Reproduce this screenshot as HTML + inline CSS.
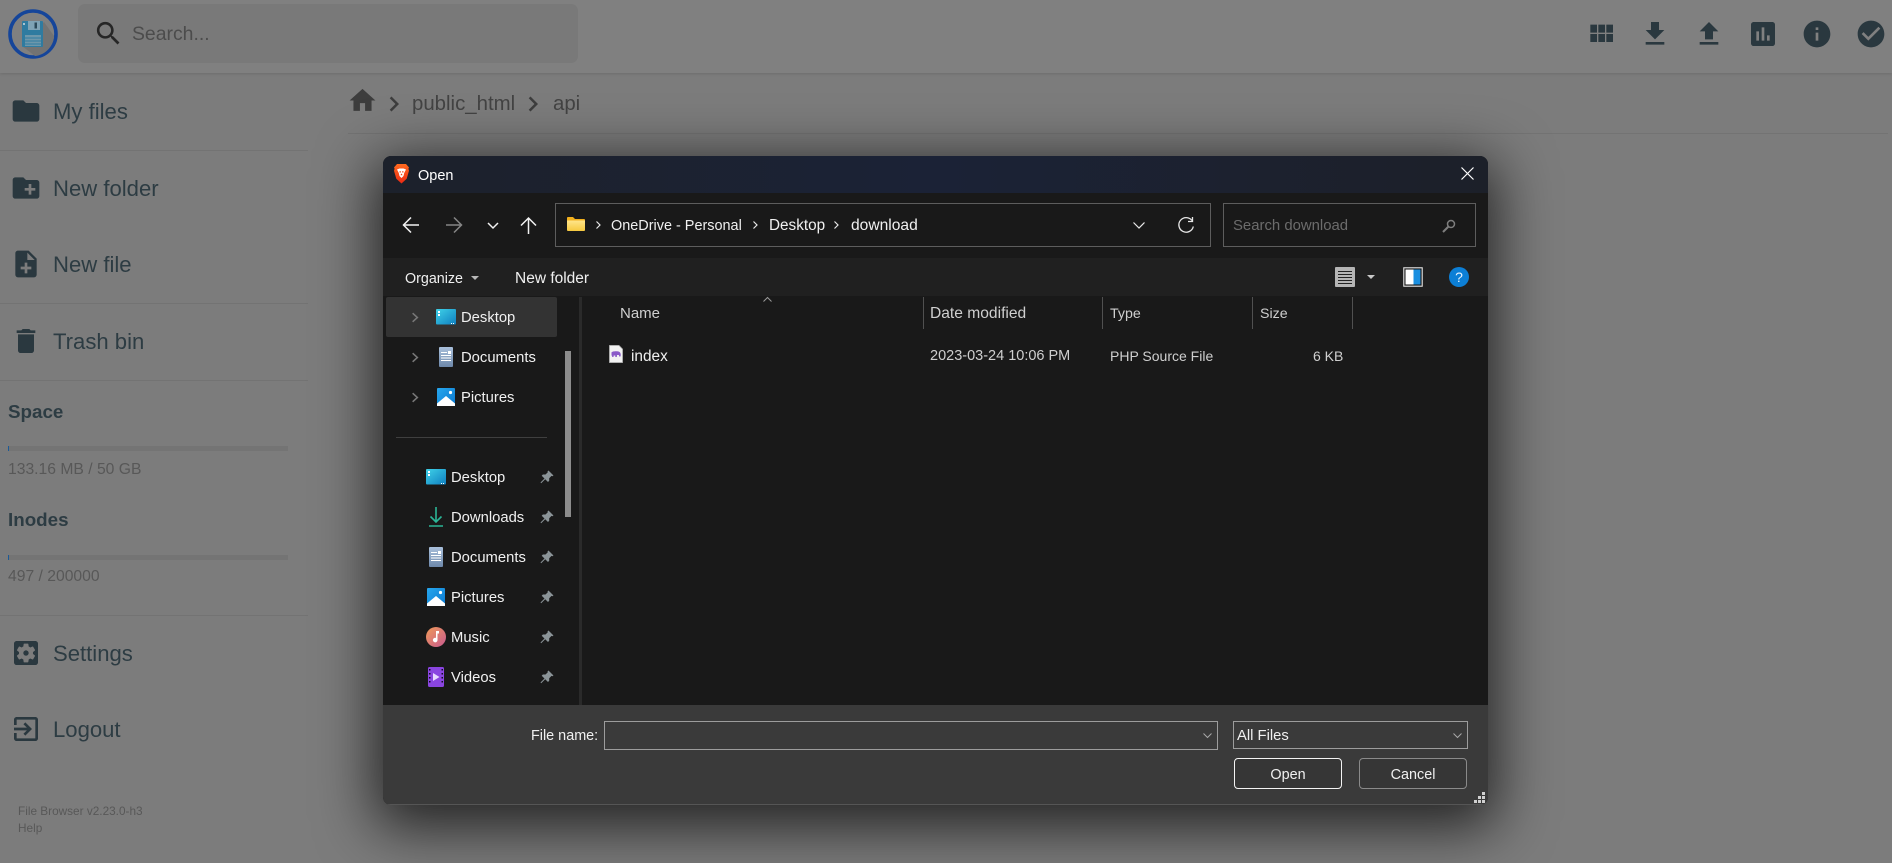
<!DOCTYPE html>
<html lang="en"><head><meta charset="utf-8"><title>File Browser</title>
<style>
html,body{margin:0;padding:0;width:1892px;height:863px;overflow:hidden;background:#7c7c7c;font-family:"Liberation Sans",sans-serif}
.a{position:absolute}
.t{position:absolute;white-space:nowrap;line-height:20px;height:20px}
svg{position:absolute;overflow:visible}
.side{color:#2d3c43;font-size:22.1px}
.ic{fill:#2a383f}
.hr{position:absolute;height:1px;background:#737373}
.d{color:#f0f0f0;font-size:14.8px}
.h{color:#cfcfcf;font-size:14.4px}
</style></head><body>
<svg width="0" height="0" style="position:absolute"><defs>
<symbol id="pin" viewBox="0 0 14 14"><path fill="#8b9498" d="M8.500 .5L13.500 5.500 12.300 6.200 11.500 5.900 9.200 8.200 9.200 10.800 8 12 5.200 9.200 1.200 13.200 .5 12.500 4.500 8.500 1.700 5.700 2.900 4.500 5.500 4.500 7.800 2.200 7.500 1.500z"/></symbol>
<symbol id="chev" viewBox="0 0 10 14"><path fill="none" stroke="#777" stroke-width="2" d="M2 1.500L8 7 2 12.500"/></symbol>
<symbol id="desk" viewBox="0 0 20 16"><defs><linearGradient id="dg" x1="0" y1="0" x2="1" y2="1"><stop offset="0" stop-color="#3fd2e8"/><stop offset="1" stop-color="#0f7fc0"/></linearGradient></defs><rect width="20" height="15.500" rx="1" fill="url(#dg)"/><rect x="2" y="2" width="2" height="2" fill="#fff"/><rect x="2" y="5" width="2" height="2" fill="#fff"/><rect x="15" y="14" width="1" height="1" fill="#fff"/><rect x="17" y="14" width="1" height="1" fill="#fff"/></symbol>
<symbol id="doc" viewBox="0 0 14 20"><defs><linearGradient id="dc" x1="0" y1="0" x2="0" y2="1"><stop offset="0" stop-color="#a9c0dc"/><stop offset="1" stop-color="#6d88aa"/></linearGradient></defs><rect width="14" height="20" rx="1" fill="url(#dc)"/><path fill="#fff" d="M2 5h6v1H2zM9 4h3v3H9zM2 8h10v1H2zM2 10.500h10v1H2zM2 13h10v1H2z"/></symbol>
<symbol id="pic" viewBox="0 0 18 18"><defs><linearGradient id="pg" x1="0" y1="0" x2="1" y2="1"><stop offset="0" stop-color="#27a7ee"/><stop offset="1" stop-color="#0a78cf"/></linearGradient></defs><rect width="18" height="18" rx="1" fill="url(#pg)"/><path fill="#fff" d="M0 18V15.500L9 8l9 7.500V18z"/><circle cx="13.500" cy="4.500" r="1.600" fill="#fff"/></symbol>
</defs></svg>

<!-- header -->
<div class="a" style="left:0;top:0;width:1892px;height:73px;background:#808080;box-shadow:0 1px 3px rgba(0,0,0,.12)"></div>
<svg style="left:8px;top:9px" width="50" height="50" viewBox="0 0 50 50">
<circle cx="25" cy="25" r="23" fill="#808080" stroke="#15459a" stroke-width="3.600"/>
<path fill="#737373" d="M14 37L36 13 46 27C46 36 38 46 27 47z"/>
<rect x="14" y="12" width="21" height="26" rx="1" fill="#2f7ba0"/>
<rect x="20" y="12" width="12" height="9" fill="#7fa3b5"/><rect x="26.500" y="13.500" width="2.500" height="6" fill="#2c4a5a"/>
<rect x="17" y="26" width="16" height="11" fill="#6d97ab"/><path stroke="#2f7ba0" stroke-width="1" d="M17 29h16M17 32h16M17 35h16"/>
<rect x="15" y="14" width="2" height="2" fill="#a9c4d0"/>
</svg>
<div class="a" style="left:78px;top:4px;width:500px;height:59px;background:#797979;border-radius:7px"></div>
<svg style="left:93px;top:18px" width="31" height="31" viewBox="0 0 24 24"><path fill="#262626" d="M15.500 14h-.79l-.28-.27C15.410 12.590 16 11.110 16 9.500 16 5.910 13.090 3 9.500 3S3 5.910 3 9.500 5.910 16 9.500 16c1.610 0 3.090-.59 4.230-1.570l.27.28v.79l5 4.990L20.490 19l-4.990-5zm-6 0C7.010 14 5 11.990 5 9.500S7.010 5 9.500 5 14 7.010 14 9.500 11.990 14 9.500 14z"/></svg>
<div class="t" style="left:132px;top:24px;font-size:19.400px;color:#4c4c4c">Search...</div>

<svg class="ic" style="left:1585px;top:18px" width="32" height="32" viewBox="0 0 24 24"><path d="M4 11h5V5H4v6zm0 7h5v-6H4v6zm6 0h5v-6h-5v6zm6 0h5v-6h-5v6zm-6-7h5V5h-5v6zm6-6v6h5V5h-5z"/></svg>
<svg class="ic" style="left:1639px;top:18px" width="32" height="32" viewBox="0 0 24 24"><path d="M19 9h-4V3H9v6H5l7 7 7-7zM5 18v2h14v-2H5z"/></svg>
<svg class="ic" style="left:1693px;top:18px" width="32" height="32" viewBox="0 0 24 24"><path d="M9 16h6v-6h4l-7-7-7 7h4v6zm-4 2h14v2H5z"/></svg>
<svg class="ic" style="left:1747px;top:18px" width="32" height="32" viewBox="0 0 24 24"><path d="M19 3H5c-1.100 0-2 .9-2 2v14c0 1.100.9 2 2 2h14c1.100 0 2-.9 2-2V5c0-1.100-.9-2-2-2zM9 17H7v-7h2v7zm4 0h-2V7h2v10zm4 0h-2v-4h2v4z"/></svg>
<svg class="ic" style="left:1801px;top:18px" width="32" height="32" viewBox="0 0 24 24"><path d="M12 2C6.480 2 2 6.480 2 12s4.480 10 10 10 10-4.480 10-10S17.520 2 12 2zm1 15h-2v-6h2v6zm0-8h-2V7h2v2z"/></svg>
<svg class="ic" style="left:1855px;top:18px" width="32" height="32" viewBox="0 0 24 24"><path d="M12 2C6.480 2 2 6.480 2 12s4.480 10 10 10 10-4.480 10-10S17.520 2 12 2zm-2 15l-5-5 1.410-1.410L10 14.170l7.590-7.590L19 8l-9 9z"/></svg>

<!-- breadcrumbs -->
<svg style="left:347px;top:85px" width="31" height="31" viewBox="0 0 24 24"><path fill="#3d3d3d" d="M10 20v-6h4v6h5v-8h3L12 3 2 12h3v8z"/></svg>
<svg style="left:379px;top:89px" width="30" height="30" viewBox="0 0 24 24"><path fill="#3d3d3d" d="M10 6L8.590 7.410 13.170 12l-4.580 4.590L10 18l6-6z"/></svg>
<div class="t" style="left:412px;top:94px;font-size:20.400px;color:#434343">public_html</div>
<svg style="left:518px;top:89px" width="30" height="30" viewBox="0 0 24 24"><path fill="#3d3d3d" d="M10 6L8.590 7.410 13.170 12l-4.580 4.590L10 18l6-6z"/></svg>
<div class="t" style="left:553px;top:94px;font-size:20.400px;color:#434343">api</div>
<div class="hr" style="left:348px;top:133px;width:1540px"></div>

<!-- sidebar -->
<svg class="ic" style="left:10px;top:95px" width="32" height="32" viewBox="0 0 24 24"><path d="M10 4H4c-1.100 0-1.990.9-1.990 2L2 18c0 1.100.9 2 2 2h16c1.100 0 2-.9 2-2V8c0-1.100-.9-2-2-2h-8l-2-2z"/></svg>
<div class="t side" style="left:53px;top:102px">My files</div>
<div class="hr" style="left:0;top:150px;width:308px"></div>
<svg class="ic" style="left:10px;top:172px" width="32" height="32" viewBox="0 0 24 24"><path d="M20 6h-8l-2-2H4c-1.110 0-1.990.89-1.990 2L2 18c0 1.110.89 2 2 2h16c1.110 0 2-.89 2-2V8c0-1.110-.89-2-2-2zm-1 8h-3v3h-2v-3h-3v-2h3V9h2v3h3v2z"/></svg>
<div class="t side" style="left:53px;top:179px">New folder</div>
<svg class="ic" style="left:10px;top:248px" width="32" height="32" viewBox="0 0 24 24"><path d="M14 2H6c-1.100 0-1.990.9-1.990 2L4 20c0 1.100.89 2 1.990 2H18c1.100 0 2-.9 2-2V8l-6-6zm2 14h-3v3h-2v-3H8v-2h3v-3h2v3h3v2zm-3-7V3.500L18.500 9H13z"/></svg>
<div class="t side" style="left:53px;top:255px">New file</div>
<div class="hr" style="left:0;top:303px;width:308px"></div>
<svg class="ic" style="left:10px;top:325px" width="32" height="32" viewBox="0 0 24 24"><path d="M6 19c0 1.100.9 2 2 2h8c1.100 0 2-.9 2-2V7H6v12zM19 4h-3.500l-1-1h-5l-1 1H5v2h14V4z"/></svg>
<div class="t side" style="left:53px;top:332px">Trash bin</div>
<div class="hr" style="left:0;top:380px;width:308px"></div>

<div class="t" style="left:8px;top:402px;font-size:18.800px;font-weight:bold;color:#2d3c43">Space</div>
<div class="a" style="left:8px;top:446px;width:280px;height:5px;background:#747474"></div>
<div class="a" style="left:8px;top:446px;width:1px;height:5px;background:#1c5a96"></div>
<div class="t" style="left:8px;top:460px;font-size:15.700px;color:#585858">133.16 MB / 50 GB</div>
<div class="t" style="left:8px;top:510px;font-size:18.800px;font-weight:bold;color:#2d3c43">Inodes</div>
<div class="a" style="left:8px;top:555px;width:280px;height:5px;background:#747474"></div>
<div class="a" style="left:8px;top:555px;width:1px;height:5px;background:#1c5a96"></div>
<div class="t" style="left:8px;top:567px;font-size:15.700px;color:#585858">497 / 200000</div>
<div class="hr" style="left:0;top:615px;width:308px"></div>

<svg class="ic" style="left:10px;top:637px" width="32" height="32" viewBox="0 0 24 24"><path d="M12 10c-1.100 0-2 .9-2 2s.9 2 2 2 2-.9 2-2-.9-2-2-2zm7-7H5c-1.110 0-2 .9-2 2v14c0 1.100.89 2 2 2h14c1.110 0 2-.9 2-2V5c0-1.100-.89-2-2-2zm-1.750 9c0 .23-.02.46-.05.68l1.480 1.160c.13.11.17.3.08.45l-1.400 2.420c-.09.15-.27.21-.43.15l-1.740-.7c-.36.28-.76.51-1.180.69l-.26 1.850c-.03.17-.18.3-.35.3h-2.800c-.17 0-.32-.13-.35-.29l-.26-1.850c-.43-.18-.82-.41-1.180-.69l-1.740.7c-.16.06-.34 0-.43-.15l-1.400-2.420c-.09-.15-.05-.34.08-.45l1.480-1.160c-.03-.23-.05-.46-.05-.69 0-.23.02-.46.05-.68l-1.480-1.160c-.13-.11-.17-.3-.08-.45l1.400-2.420c.09-.15.27-.21.43-.15l1.740.7c.36-.28.76-.51 1.180-.69l.26-1.850c.03-.17.18-.3.35-.3h2.800c.17 0 .32.13.35.29l.26 1.850c.43.18.82.41 1.180.69l1.740-.7c.16-.06.34 0 .43.15l1.400 2.420c.09.15.05.34-.08.45l-1.480 1.160c.03.23.05.46.05.69z"/></svg>
<div class="t side" style="left:53px;top:644px">Settings</div>
<svg class="ic" style="left:10px;top:713px" width="32" height="32" viewBox="0 0 24 24"><path d="M10.090 15.590L11.500 17l5-5-5-5-1.410 1.410L12.670 11H3v2h9.670l-2.580 2.590zM19 3H5c-1.110 0-2 .9-2 2v4h2V5h14v14H5v-4H3v4c0 1.100.89 2 2 2h14c1.100 0 2-.9 2-2V5c0-1.100-.9-2-2-2z"/></svg>
<div class="t side" style="left:53px;top:720px">Logout</div>
<div class="t" style="left:18px;top:801px;font-size:11.800px;color:#585858">File Browser v2.23.0-h3</div>
<div class="t" style="left:18px;top:818px;font-size:11.800px;color:#585858">Help</div>

<!-- dialog -->
<div class="a" style="left:383px;top:156px;width:1105px;height:649px;border-radius:8px;overflow:hidden;background:#191919;box-shadow:0 14px 58px 8px rgba(0,0,0,.72)">
 <div class="a" style="left:0;top:0;width:1105px;height:37px;background:linear-gradient(90deg,#1c212b,#1b2236 50%,#1c2029)"></div>
 <div class="a" style="left:0;top:102px;width:1105px;height:38px;background:#202020"></div>
 <div class="a" style="left:0;top:549px;width:1105px;height:100px;background:#3a3a3a;border-bottom:1px solid #555;box-sizing:border-box"></div>
</div>

<!-- title bar -->
<svg style="left:393px;top:163px" width="17" height="21" viewBox="0 0 17 21">
<defs><linearGradient id="br" x1="0" y1="0" x2="0" y2="1"><stop offset="0" stop-color="#ff6a1f"/><stop offset="1" stop-color="#ec2a14"/></linearGradient></defs>
<path fill="url(#br)" d="M4 1h9l3 3.500-.6 1.200.6 2-2.300 8L8.500 20.500 3.300 15.700 1 7.700l.6-2L1 4.500z"/>
<path fill="#fff" d="M4 6.500L6.500 5.500h4L13 6.500l-1.800 3.500-.7 3-2 2-2-2-.7-3z"/><path fill="#f04a1a" d="M6.500 8.300h1.400v1.200H6.500zM9.100 8.300h1.400v1.200H9.100zM8 10.800h1l.4 1.500H7.600z"/></svg>
<div class="t d" style="left:418px;top:166px;color:#fff;font-size:14.500px">Open</div>
<svg style="left:1461px;top:167px" width="13" height="13"><path stroke="#fff" stroke-width="1.200" d="M.5.500l12 12M12.500.500l-12 12" fill="none"/></svg>

<!-- nav buttons -->
<svg style="left:402px;top:216px" width="17" height="18" fill="none" stroke="#f2f2f2" stroke-width="1.500"><path d="M1 9h16M9 1.500L1.500 9 9 16.500"/></svg>
<svg style="left:446px;top:216px" width="17" height="18" fill="none" stroke="#858585" stroke-width="1.500"><path d="M0 9h16M8 1.500L15.500 9 8 16.500"/></svg>
<svg style="left:487px;top:222px" width="12" height="7" fill="none" stroke="#f2f2f2" stroke-width="1.500"><path d="M1 1l5 5 5-5"/></svg>
<svg style="left:520px;top:217px" width="17" height="17" fill="none" stroke="#f2f2f2" stroke-width="1.500"><path d="M8.500 17V1M1 8.500L8.500 1 16 8.500"/></svg>

<!-- address bar -->
<div class="a" style="left:555px;top:203px;width:654px;height:42px;border:1px solid #5d5d5d"></div>
<svg style="left:567px;top:217px" width="18" height="14" viewBox="0 0 18 14"><defs><linearGradient id="fg" x1="0" y1="0" x2="0" y2="1"><stop offset="0" stop-color="#ffe58a"/><stop offset="1" stop-color="#f6c93f"/></linearGradient></defs><path fill="#f2b01e" d="M0 1C0 .4.4 0 1 0h5l2 2h9c.6 0 1 .4 1 1v2H0z"/><path fill="url(#fg)" d="M0 3.500h18V13c0 .6-.4 1-1 1H1c-.6 0-1-.4-1-1z"/></svg>
<svg style="left:596px;top:221px" width="5" height="8" fill="none" stroke="#e8e8e8" stroke-width="1.200"><path d="M.5.500L4 4 .5 7.500"/></svg>
<div class="t d" style="left:611px;top:216px;font-size:14.450px">OneDrive - Personal</div>
<svg style="left:753px;top:221px" width="5" height="8" fill="none" stroke="#e8e8e8" stroke-width="1.200"><path d="M.5.500L4 4 .5 7.500"/></svg>
<div class="t d" style="left:769px;top:216px;font-size:15.300px">Desktop</div>
<svg style="left:834px;top:221px" width="5" height="8" fill="none" stroke="#e8e8e8" stroke-width="1.200"><path d="M.5.500L4 4 .5 7.500"/></svg>
<div class="t d" style="left:851px;top:216px;font-size:15.600px">download</div>
<svg style="left:1133px;top:222px" width="12" height="7" fill="none" stroke="#e8e8e8" stroke-width="1.200"><path d="M.5.500L6 6 11.500.500"/></svg>
<svg style="left:1178px;top:217px" width="16" height="17" fill="none" stroke="#e6e6e6" stroke-width="1.300"><path d="M14 3.500A7.300 7.300 0 1 0 15.300 9.500"/><path d="M14.500 0v4.500H10"/></svg>
<div class="a" style="left:1223px;top:203px;width:251px;height:42px;border:1px solid #5d5d5d"></div>
<div class="t" style="left:1233px;top:216px;font-size:14.900px;color:#6c6c6c">Search download</div>
<svg style="left:1442px;top:219px" width="14" height="14" fill="none" stroke="#7e7e7e"><circle cx="9" cy="5" r="3.500" stroke-width="1.500"/><path d="M6.500 7.500L1 13" stroke-width="2"/></svg>

<!-- toolbar -->
<div class="t d" style="left:405px;top:269px;font-size:14.300px">Organize</div>
<svg style="left:471px;top:276px" width="8" height="4"><path fill="#b8b8b8" d="M0 0h8L4 4z"/></svg>
<div class="t d" style="left:515px;top:269px;font-size:15.500px">New folder</div>
<svg style="left:1335px;top:267px" width="20" height="20"><rect width="20" height="20" rx="1" fill="#b5b5b5"/><path stroke="#222" d="M3 4.500h14M3 7.500h14M3 10.500h14M3 13.500h14M3 16.500h14"/></svg>
<svg style="left:1367px;top:275px" width="8" height="4"><path fill="#c8c8c8" d="M0 0h8L4 4z"/></svg>
<svg style="left:1403px;top:267px" width="20" height="20"><rect width="20" height="20" rx="1" fill="#b5b5b5"/><rect x="1.500" y="1.500" width="17" height="17" fill="#111"/><rect x="2.500" y="2.500" width="8" height="15" fill="#fff"/><rect x="10.500" y="2.500" width="7" height="15" fill="#1a8fe0"/></svg>
<svg style="left:1449px;top:267px" width="20" height="20"><circle cx="10" cy="10" r="10" fill="#0c7fd6"/><text x="10" y="15" text-anchor="middle" font-family="Liberation Sans,sans-serif" font-size="14" fill="#e8f4ff">?</text></svg>

<!-- nav pane -->
<div class="a" style="left:386px;top:297px;width:171px;height:40px;background:#333;border-radius:2px"></div>
<svg style="left:411px;top:312px" width="8" height="11"><use href="#chev"/></svg>
<svg style="left:411px;top:352px" width="8" height="11"><use href="#chev"/></svg>
<svg style="left:411px;top:392px" width="8" height="11"><use href="#chev"/></svg>
<svg style="left:436px;top:309px" width="20" height="16"><use href="#desk"/></svg>
<div class="t d" style="left:461px;top:308px">Desktop</div>
<svg style="left:439px;top:347px" width="14" height="20"><use href="#doc"/></svg>
<div class="t d" style="left:461px;top:348px">Documents</div>
<svg style="left:437px;top:388px" width="18" height="18"><use href="#pic"/></svg>
<div class="t d" style="left:461px;top:388px">Pictures</div>
<div class="a" style="left:396px;top:437px;width:151px;height:1px;background:#3f3f3f"></div>

<svg style="left:426px;top:469px" width="20" height="16"><use href="#desk"/></svg>
<div class="t d" style="left:451px;top:468px">Desktop</div>
<svg style="left:429px;top:507px" width="14" height="20" fill="none" stroke="#2bb596" stroke-width="1.600"><path d="M7 0v15M1.500 9.500L7 15l5.500-5.500M0 19h14"/></svg>
<div class="t d" style="left:451px;top:508px">Downloads</div>
<svg style="left:429px;top:547px" width="14" height="20"><use href="#doc"/></svg>
<div class="t d" style="left:451px;top:548px">Documents</div>
<svg style="left:427px;top:588px" width="18" height="18"><use href="#pic"/></svg>
<div class="t d" style="left:451px;top:588px">Pictures</div>
<svg style="left:426px;top:627px" width="20" height="20" viewBox="0 0 20 20"><defs><linearGradient id="mg" x1="0" y1="0" x2="1" y2="1"><stop offset="0" stop-color="#f09a58"/><stop offset="1" stop-color="#c85a90"/></linearGradient></defs><circle cx="10" cy="10" r="10" fill="url(#mg)"/><path fill="#fff" d="M10 4h3v2.500h-1.500V13a2.300 2.300 0 1 1-1.500-2.100z"/></svg>
<div class="t d" style="left:451px;top:628px">Music</div>
<svg style="left:428px;top:667px" width="16" height="20" viewBox="0 0 16 20"><rect width="16" height="20" rx="1.500" fill="#8a45e0"/><path fill="#120a20" d="M1 2h1.500v1.500H1zM1 6h1.500v1.500H1zM1 10h1.500v1.500H1zM1 14h1.500v1.500H1zM13.500 2H15v1.500h-1.500zM13.500 6H15v1.500h-1.500zM13.500 10H15v1.500h-1.500zM13.500 14H15v1.500h-1.500z"/><path fill="#e8d8ff" d="M5 6l6.500 4L5 14z"/></svg>
<div class="t d" style="left:451px;top:668px">Videos</div>
<svg style="left:540px;top:470px" width="14" height="14"><use href="#pin"/></svg>
<svg style="left:540px;top:510px" width="14" height="14"><use href="#pin"/></svg>
<svg style="left:540px;top:550px" width="14" height="14"><use href="#pin"/></svg>
<svg style="left:540px;top:590px" width="14" height="14"><use href="#pin"/></svg>
<svg style="left:540px;top:630px" width="14" height="14"><use href="#pin"/></svg>
<svg style="left:540px;top:670px" width="14" height="14"><use href="#pin"/></svg>
<div class="a" style="left:565px;top:351px;width:6px;height:166px;background:#8c8c8c"></div>
<div class="a" style="left:579px;top:297px;width:3px;height:408px;background:#2a2a2a"></div>

<!-- list -->
<svg style="left:763px;top:297px" width="9" height="5" fill="none" stroke="#9a9a9a"><path d="M.5 4.500L4.500.5l4 4"/></svg>
<div class="t h" style="left:620px;top:304px;font-size:15px">Name</div>
<div class="t h" style="left:930px;top:304px;font-size:15.600px">Date modified</div>
<div class="t h" style="left:1110px;top:304px;font-size:14.200px">Type</div>
<div class="t h" style="left:1260px;top:304px;font-size:14.200px">Size</div>
<div class="a" style="left:923px;top:297px;width:1px;height:32px;background:#505050"></div>
<div class="a" style="left:1102px;top:297px;width:1px;height:32px;background:#505050"></div>
<div class="a" style="left:1252px;top:297px;width:1px;height:32px;background:#505050"></div>
<div class="a" style="left:1352px;top:297px;width:1px;height:32px;background:#505050"></div>
<svg style="left:609px;top:345px" width="14" height="18" viewBox="0 0 14 18"><path fill="#f2f2f2" stroke="#9a9a9a" stroke-width=".7" d="M.4.400H10L13.600 4V17.600H.4z"/><path fill="#8a5ac8" d="M2.500 7.500C3.500 6 9 6 10.500 7c1.300 1 1.500 3 1 4.500h-1.300l-.3-1.500H8l-.2 2H6.300V10.500H4.700L4.500 12H3.300L2.500 10z"/></svg>
<div class="t d" style="left:631px;top:347px;font-size:15.400px">index</div>
<div class="t" style="left:930px;top:346px;font-size:14.500px;color:#cfcfcf">2023-03-24 10:06 PM</div>
<div class="t" style="left:1110px;top:346px;font-size:14px;color:#cfcfcf">PHP Source File</div>
<div class="t" style="left:1313px;top:346px;width:30px;text-align:right;font-size:14px;color:#cfcfcf">6 KB</div>

<!-- footer -->
<div class="t d" style="left:531px;top:726px;font-size:14.400px">File name:</div>
<div class="a" style="left:604px;top:721px;width:612px;height:27px;border:1px solid #9c9c9c"></div>
<svg style="left:1203px;top:733px" width="9" height="5" fill="none" stroke="#a8a8a8"><path d="M.5.500L4.500 4.500l4-4"/></svg>
<div class="a" style="left:1233px;top:721px;width:233px;height:26px;border:1px solid #9c9c9c"></div>
<div class="t d" style="left:1237px;top:726px">All Files</div>
<svg style="left:1453px;top:733px" width="9" height="5" fill="none" stroke="#a8a8a8"><path d="M.5.500L4.500 4.500l4-4"/></svg>
<div class="a" style="left:1234px;top:758px;width:106px;height:29px;border:1px solid #f4f4f4;border-radius:4px;background:#363636"></div>
<div class="t d" style="left:1234px;top:765px;width:108px;text-align:center;font-size:14.400px">Open</div>
<div class="a" style="left:1359px;top:758px;width:106px;height:29px;border:1px solid #8a8a8a;border-radius:4px;background:#363636"></div>
<div class="t d" style="left:1359px;top:765px;width:108px;text-align:center;font-size:14.400px">Cancel</div>
<svg style="left:1474px;top:792px" width="12" height="12"><path fill="#d0d0d0" d="M8 0h3v3H8zM4 4h3v3H4zM8 4h3v3H8zM0 8h3v3H0zM4 8h3v3H4zM8 8h3v3H8z"/></svg>
</body></html>
